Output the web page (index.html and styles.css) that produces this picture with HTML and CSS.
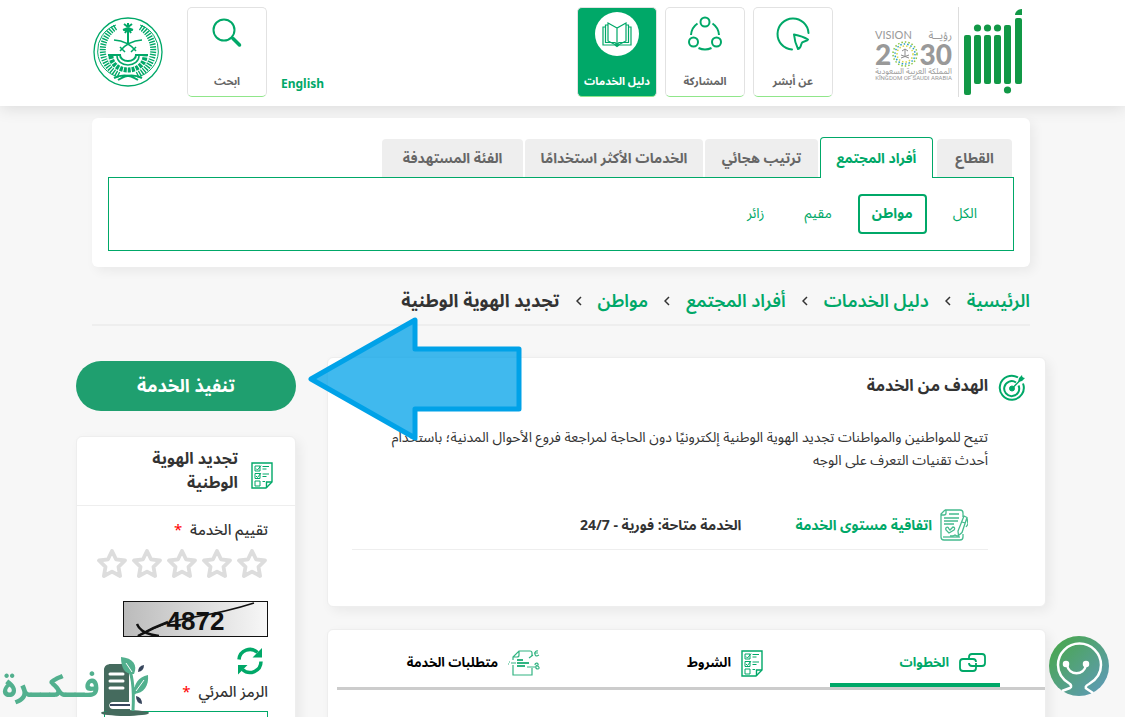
FILE: index.html
```html
<!DOCTYPE html>
<html lang="ar" dir="rtl">
<head>
    <meta charset="UTF-8">
    <meta name="viewport" content="width=device-width, initial-scale=1.0">
    <title>تجديد الهوية الوطنية</title>
    <link rel="stylesheet" href="styles.css">
</head>
<body>
    <!-- shared icons -->
    <svg class="defs" width="0" height="0" aria-hidden="true">
        <symbol id="star" viewBox="0 0 32 30">
            <path d="M16 3l4 8.300 9 1.200-6.500 6.300 1.600 9.200-8.100-4.400-8.100 4.400 1.600-9.200L3 12.500l9-1.200z" fill="none" stroke="#ddd" stroke-width="3.800" stroke-linejoin="round"/>
        </symbol>
        <symbol id="checklist" viewBox="0 0 22 27">
            <g fill="none" stroke="#00a868">
                <path d="M1 1h20v19l-6 6H1z" stroke-width="1.400"/>
                <path d="M21 20h-5.500v6" stroke-width="1.400"/>
                <path d="M4 4h5v5H4zM4 11.500h5v5H4zM4 19h5v5H4z"/>
                <path d="M5 6.500l1.500 1.500L10 3.500M5 14l1.500 1.500L10 11M11.500 4.500H18M11.500 7h4M11.500 12H18M11.500 14.500h4M11.500 19.500H14"/>
            </g>
        </symbol>
    </svg>

    <header class="header">
        <div class="container header-row">
            <a class="logo" href="#" aria-label="أبشر">
                <svg width="60" height="88" viewBox="0 0 60 88">
                    <g fill="#119846">
                        <rect x="1" y="27" width="7" height="60" rx="2"/>
                        <rect x="11" y="27" width="7" height="49" rx="2"/>
                        <rect x="21" y="27" width="7" height="49" rx="2"/>
                        <rect x="31" y="27" width="7" height="49" rx="2"/>
                        <rect x="41" y="17" width="7" height="59" rx="2"/>
                        <rect x="52" y="10" width="7" height="66" rx="2"/>
                        <circle cx="14.500" cy="20" r="3.600"/>
                        <circle cx="24.500" cy="20" r="3.600"/>
                        <circle cx="34.500" cy="20" r="3.600"/>
                        <circle cx="44.500" cy="82" r="3.600"/>
                        <path d="M52 7c0-3 3-6 7-6v6z"/>
                    </g>
                </svg>
            </a>
            <div class="vision" dir="ltr">
                <div class="vision-top"><span>VISION</span><span lang="ar">رؤيــة</span></div>
                <div class="vision-year">
                    <span>2</span>
                    <svg width="26" height="26" viewBox="-13 -13 26 26">
                        <g fill="none" stroke-width="1.500" stroke-dasharray="1.500 2">
                            <circle r="12" stroke="#8cc63f"/>
                            <circle r="10" stroke="#2b9fc4"/>
                            <circle r="8" stroke="#d9d84a"/>
                        </g>
                        <path d="M0-5v7M-3-3l3-2 3 2M-4 4l8-3M4 4l-8-3" stroke="#8c8c8c" fill="none"/>
                    </svg>
                    <span>30</span>
                </div>
                <div class="vision-ar" lang="ar" dir="rtl">المملكة العربية السعودية</div>
                <div class="vision-en">KINGDOM OF SAUDI ARABIA</div>
            </div>
            <nav class="tiles">
                <a class="tile" href="#">
                    <svg width="36" height="36" viewBox="0 0 36 36" fill="none" stroke="#00a868" stroke-width="2" stroke-linecap="round" stroke-linejoin="round">
                        <path d="M17 33.500A15.500 15.500 0 1 1 33.500 17"/>
                        <path d="M19 18.500c5 1 10 2.500 14 5-1 2-6 1.500-6.500 4-.5 2-1 5-3.500 5.500-2-4-3.500-9-4-14.500z"/>
                    </svg>
                    <span>عن أبشر</span>
                </a>
                <a class="tile" href="#">
                    <svg width="36" height="36" viewBox="0 0 36 36" fill="none" stroke="#00a868" stroke-width="2">
                        <circle cx="18" cy="6" r="4.500"/>
                        <circle cx="6.500" cy="26" r="4.500"/>
                        <circle cx="29.500" cy="26" r="4.500"/>
                        <path d="M10.500 7.500A15 15 0 0 0 4 19M25.500 7.500A15 15 0 0 1 32 19M11.500 32a15 15 0 0 0 13 0"/>
                    </svg>
                    <span>المشاركة</span>
                </a>
                <a class="tile active" href="#">
                    <svg width="44" height="44" viewBox="0 0 44 44" fill="none" stroke="#00a868" stroke-width="1.200">
                        <circle cx="22" cy="22" r="22" fill="#fff" stroke="none"/>
                        <path d="M22 16l-9-5v18l9 4.500 9-4.500V11zM22 16v17"/>
                        <path d="M13 13h-2.500v17.500H20l2 2 2-2h9.500V13H31M10.500 15H8v18h12l2 1.500 2-1.500h12V15h-2.500"/>
                    </svg>
                    <span>دليل الخدمات</span>
                </a>
            </nav>
            <a class="lang" href="#" lang="en">English</a>
            <a class="tile" href="#">
                <svg width="36" height="36" viewBox="0 0 36 36" fill="none" stroke="#00a868">
                    <circle cx="15" cy="14" r="10.500" stroke-width="2"/>
                    <path d="M22.500 21.500l2 2" stroke-width="2"/>
                    <path d="M24 22.500l6.500 6.500" stroke-width="3.500" stroke-linecap="round"/>
                </svg>
                <span>ابحث</span>
            </a>
            <svg class="emblem" width="70" height="70" viewBox="-35 -35 70 70">
                <g fill="none" stroke="#00a868">
                    <circle r="34" stroke-width="1.300"/>
                    <path d="M-9 23A27 27 0 0 1-12-25M9 23A27 27 0 0 0 12-25" stroke-width="6" stroke-dasharray="1.400 1.200"/>
                    <path d="M-9 25A27 27 0 0 1-12-27M9 25A27 27 0 0 0 12-27"/>
                    <path d="M0-24V-9" stroke-width="2"/>
                    <path d="M0-24l-5 2M0-24l5 2M0-25l-4-3M0-25l4-3M0-24l-3 5M0-24l3 5M0-25v-4" stroke-width="2"/>
                    <path d="M-14-12Q0-11 8-1M14-12Q0-11-8-1M-8-5l5 5M8-5l-5 5" stroke-width="1.500"/>
                    <path d="M-17 4a17 14 0 0 0 34 0" stroke-width="5" stroke-dasharray="3 1"/>
                    <path d="M-20 3H-8a8 6 0 0 0 16 0h12" stroke-width="2"/>
                    <path d="M-11 4a11 9 0 0 0 22 0" stroke-width="1.500"/>
                    <path d="M-14 26Q-2 20 10 28M14 26Q2 20-10 28" stroke-width="2"/>
                </g>
            </svg>
        </div>
    </header>

    <main class="container">
        <section class="panel">
            <div class="tabs">
                <button class="tab">القطاع</button>
                <button class="tab selected">أفراد المجتمع</button>
                <button class="tab">ترتيب هجائي</button>
                <button class="tab">الخدمات الأكثر استخدامًا</button>
                <button class="tab">الفئة المستهدفة</button>
            </div>
            <div class="filters">
                <a href="#">الكل</a>
                <a class="current" href="#">مواطن</a>
                <a href="#">مقيم</a>
                <a href="#">زائر</a>
            </div>
        </section>

        <nav class="breadcrumb">
            <a href="#">الرئيسية</a>
            <svg width="6" height="10" viewBox="0 0 6 10"><path d="M5 1L1 5l4 4"/></svg>
            <a href="#">دليل الخدمات</a>
            <svg width="6" height="10" viewBox="0 0 6 10"><path d="M5 1L1 5l4 4"/></svg>
            <a href="#">أفراد المجتمع</a>
            <svg width="6" height="10" viewBox="0 0 6 10"><path d="M5 1L1 5l4 4"/></svg>
            <a href="#">مواطن</a>
            <svg width="6" height="10" viewBox="0 0 6 10"><path d="M5 1L1 5l4 4"/></svg>
            <span>تجديد الهوية الوطنية</span>
        </nav>

        <div class="columns">
            <div class="content">
                <section class="card goal">
                    <svg class="goal-icon" width="28" height="28" viewBox="0 0 28 28" fill="none" stroke="#00a868">
                        <path d="M20 3.500A12 12 0 1 0 25 9.500" stroke-width="2"/>
                        <path d="M18 8.500a7.500 7.500 0 1 0 2.500 3" stroke-width="2"/>
                        <circle cx="14" cy="14.500" r="2.500" fill="#00a868"/>
                        <path d="M14 14.500L25 3.500" stroke-width="1.500"/>
                        <path d="M20 8l1-4 3-3 .5 2.500 2.500.5-3 3z" fill="#00a868" stroke="none"/>
                    </svg>
                    <div class="goal-body">
                        <h2>الهدف من الخدمة</h2>
                        <p>تتيح للمواطنين والمواطنات تجديد الهوية الوطنية إلكترونيًا دون الحاجة لمراجعة فروع الأحوال المدنية؛ باستخدام أحدث تقنيات التعرف على الوجه</p>
                        <div class="sla">
                            <svg width="28" height="32" viewBox="0 0 28 32" fill="none" stroke="#45bb8e" stroke-width="1.300">
                                <path d="M5 1h15c2 0 3 1 3 3v4M5 1L1 5v23c0 2 1 3 3 3h16c2 0 3-1 3-3v-3M1 6h3c1 0 2-1 2-2V1"/>
                                <path d="M9 5h10M4 9h15M4 12h14M4 15h10" stroke-width="1.600"/>
                                <path d="M24 7l3 1.500-5 15-3.500 3L18 22zM22 13l3 1M27 9l1 6-2 3"/>
                                <path d="M9 24l-3-3c-1-3 2-4 3-1l1 1 3-3c2 0 2 2 1 3zM10 27h3l2-1 2 1h2"/>
                                <path d="M3 28h17"/>
                            </svg>
                            <a href="#">اتفاقية مستوى الخدمة</a>
                            <span>الخدمة متاحة: فورية - 24/7</span>
                        </div>
                    </div>
                </section>

                <section class="card details">
                    <div class="detail-tabs">
                        <button class="detail-tab on">
                            <svg width="27" height="20" viewBox="0 0 27 20" fill="none" stroke="#00a868" stroke-width="1.800">
                                <path d="M10 7V4c0-2 1-3 3-3h10c2 0 3 1 3 3v6c0 2-1 3-3 3H13c-2 0-3-1-3-3"/>
                                <path d="M17 10v5c0 2-1 3-3 3H4c-2 0-3-1-3-3V9c0-2 1-3 3-3h10c2 0 3 1 3 3"/>
                            </svg>
                            الخطوات
                        </button>
                        <button class="detail-tab">
                            <svg width="22" height="27"><use href="#checklist"/></svg>
                            الشروط
                        </button>
                        <button class="detail-tab">
                            <svg width="32" height="26" viewBox="0 0 32 26" fill="none" stroke="#32b482" stroke-width="1.200">
                                <path d="M5 10V7l6-6h11c2 0 2 1 2 2v3M5 15v10h19v-7M11 1v4c0 2-1 2-2 2H5"/>
                                <path d="M3 13h5M19 17h8M21 8l4-3"/>
                                <path d="M9 10h6M9 13h12M9 16h8" stroke-width="2"/>
                                <path d="M26 3h4M30 1c-4-1-4 5-1 5l2-1M27 15c0-3 4-2 3 0-3 0-3 4 0 4 2 0 1-4-2-3"/>
                                <path d="M0 14h1M1 12h1"/>
                            </svg>
                            متطلبات الخدمة
                        </button>
                    </div>
                </section>
            </div>

            <aside class="side">
                <button class="execute">تنفيذ الخدمة</button>
                <form class="card rate">
                    <div class="rate-head">
                        <svg width="22" height="27"><use href="#checklist"/></svg>
                        <h3>تجديد الهوية الوطنية</h3>
                    </div>
                    <div class="rate-body">
                        <fieldset class="rating">
                            <legend>تقييم الخدمة <b>*</b></legend>
                            <div class="stars">
                                <label><input type="radio" name="rate" value="1" aria-label="1"><svg width="32" height="30"><use href="#star"/></svg></label>
                                <label><input type="radio" name="rate" value="2" aria-label="2"><svg width="32" height="30"><use href="#star"/></svg></label>
                                <label><input type="radio" name="rate" value="3" aria-label="3"><svg width="32" height="30"><use href="#star"/></svg></label>
                                <label><input type="radio" name="rate" value="4" aria-label="4"><svg width="32" height="30"><use href="#star"/></svg></label>
                                <label><input type="radio" name="rate" value="5" aria-label="5"><svg width="32" height="30"><use href="#star"/></svg></label>
                            </div>
                        </fieldset>
                        <div class="captcha">
                            <span>4872</span>
                            <svg width="143" height="34" viewBox="0 0 143 34" fill="none" stroke="#111">
                                <path d="M14 34Q38 20 70 15T130 1" stroke-width="1.500"/>
                                <path d="M14 34q14-8 30-14M13 22q4 10 22 12" stroke-width="2.500"/>
                            </svg>
                        </div>
                        <button class="refresh" type="button" aria-label="تحديث">
                            <svg width="28" height="28" viewBox="0 0 28 28">
                                <path d="M3 12.500A11 11 0 0 1 21.500 5.500M25 14.500A11 11 0 0 1 6.500 22.500" fill="none" stroke="#00a868" stroke-width="3.500"/>
                                <path d="M26 1v9.500h-9.500zM2 27.500V18h9.500z" fill="#00a868"/>
                            </svg>
                        </button>
                        <label class="code-label" for="code">الرمز المرئي <b>*</b></label>
                        <input class="code" id="code" type="text">
                    </div>
                </form>
            </aside>
        </div>
    </main>

    <!-- pointer to the execute button -->
    <svg class="arrow" width="214" height="126" viewBox="0 0 214 126">
        <path d="M3 63L107 4v29h104v60H107v29z" fill="#00a2e8" fill-opacity=".75" stroke="#00a2e8" stroke-width="5" stroke-linejoin="round"/>
    </svg>

    <button class="assistant" aria-label="المساعد">
        <svg width="60" height="60" viewBox="0 0 60 60" fill="none" stroke="#fff" stroke-width="2.500">
            <defs>
                <linearGradient id="bot" x1="0" y1="0" x2="1" y2="1">
                    <stop offset=".15" stop-color="#4ba656"/>
                    <stop offset=".9" stop-color="#5e9bb3"/>
                </linearGradient>
            </defs>
            <circle cx="30" cy="30" r="30" fill="url(#bot)" stroke="none"/>
            <path d="M13 55l8-3c2-1 1-3 0-4-7-4-12-10-12-19a21.500 21.500 0 0 1 43 0c0 9-5 15-12 19-4 2-4 4-2 5l6 4"/>
            <path d="M18 29c2 11 17 11 19 0"/>
            <circle cx="17" cy="28" r="2" fill="#fff"/>
            <circle cx="37" cy="28" r="2" fill="#fff"/>
        </svg>
    </button>

    <div class="watermark">
        <svg width="50" height="60" viewBox="0 0 50 60">
            <path d="M4 54V13c0-4 3-6 7-6h18v38H13c-5 0-5 7 0 7h17v3z" fill="#456b5e"/>
            <path d="M10 17h13M10 24h13M10 31h13" stroke="#fff" stroke-width="3" stroke-linecap="round"/>
            <path d="M10 48h20" stroke="#37455c" stroke-width="2"/>
            <ellipse cx="25" cy="56" rx="24" ry="3" fill="#456b5e"/>
            <path d="M21 0c12 1 17 8 13 17-9 1-13-6-13-17zM48 18c1 11-4 18-14 19 0-10 4-17 14-19z" fill="#52b08e"/>
            <path d="M26 6q9 12 7 48M34 37q1-9 10-14" fill="none" stroke="#52b08e" stroke-width="3"/>
            <path d="M26 6l6 9M44 23l-8 11" stroke="#fff"/>
            <path d="M44 8q0 6-6 7 0-6 6-7zM36 39q6 1 6 8-6-1-6-8z" fill="#37455c"/>
        </svg>
        <span>فــكــرة</span>
    </div>
</body>
</html>
```
FILE: styles.css
```css
* {
    box-sizing: border-box;
}

body {
    margin: 0;
    height: 100vh;
    overflow: hidden;
    background-color: #f7f7f7;
    color: #333;
    font-family: "Noto Sans Arabic", "DejaVu Sans Condensed", "DejaVu Sans", sans-serif;
    font-size: 14px;
}

a {
    color: #00a868;
    text-decoration: none;
}

button {
    border: none;
    background: none;
    padding: 0;
    font-family: inherit;
    cursor: pointer;
}

svg {
    flex: none;
    display: block;
}

.defs {
    position: absolute;
}

.container {
    width: 100%;
    max-width: 973px;
    margin: 0 auto;
    padding-right: 3px;
}

/* header */
.header {
    background-color: #fff;
    box-shadow: 0 2px 16px rgba(0, 0, 0, 0.12);
    padding: 7px 0 9px;
}

.header-row {
    display: flex;
    align-items: center;
    padding: 0 26px 0 17px;
}

.logo {
    border-left: 1px solid #ddd;
    height: 90px;
    padding: 1px 0 1px 4px;
}

.vision {
    width: 77px;
    margin: 6px 6px 0 42px;
    color: #999;
    font-family: Lato, "Noto Sans Arabic", sans-serif;
}

.vision-top {
    display: flex;
    justify-content: space-between;
    font-size: 11px;
    line-height: 12px;
}

.vision-year {
    display: flex;
    align-items: center;
    justify-content: space-between;
    height: 26px;
    font-size: 28px;
    font-weight: 900;
    line-height: 26px;
}

.vision-ar {
    font-size: 8px;
    line-height: 8px;
    white-space: nowrap;
    text-align: center;
}

.vision-en {
    font-family: Roboto, sans-serif;
    font-size: 6px;
    line-height: 6px;
    white-space: nowrap;
    text-align: center;
}

.tiles {
    display: flex;
    gap: 8px;
    margin-left: auto;
}

.tile {
    display: flex;
    flex-direction: column;
    align-items: center;
    justify-content: space-between;
    width: 80px;
    height: 90px;
    padding: 8px 0 6px;
    border: 1px solid #e2e2e2;
    border-bottom-color: #90e68a;
    border-radius: 5px;
    color: #666;
    font-size: 11px;
    font-weight: bold;
    line-height: 16px;
}

.tile.active {
    padding-top: 4px;
    background-color: #00a868;
    color: #fff;
}

.lang {
    align-self: flex-end;
    margin: 0 0 3px 14px;
    font-family: "Noto Sans", sans-serif;
    font-size: 12px;
    font-weight: bold;
    line-height: 20px;
}

.emblem {
    margin-right: 24px;
}

/* classification panel */
.panel {
    margin: 12px 16px 0;
    padding: 19px 16px 16px;
    background-color: #fff;
    border-radius: 6px;
    box-shadow: 4px 4px 12px rgba(0, 0, 0, 0.06);
}

.tabs {
    display: grid;
    grid-template-columns: 77px 113px 113px 178px 141px;
    column-gap: 2px;
    align-items: end;
    padding: 0 2px;
}

.tab {
    height: 38px;
    background-color: #eee;
    border-radius: 4px 4px 0 0;
    color: #666;
    font-size: 14px;
    font-weight: bold;
    white-space: nowrap;
}

.tab:first-child {
    margin-left: 2px;
}

.tab.selected {
    height: 41px;
    margin-bottom: -1px;
    background-color: #fff;
    border: 1px solid #00a868;
    border-bottom: none;
    color: #00a868;
}

.filters {
    display: flex;
    gap: 12px;
    height: 74px;
    padding: 16px 22px;
    border: 1px solid #00a868;
}

.filters a {
    height: 40px;
    padding: 0 12px;
    border: 2px solid transparent;
    border-radius: 4px;
    line-height: 36px;
}

.filters .current {
    border-color: #00a868;
    font-weight: bold;
}

/* breadcrumb */
.breadcrumb {
    display: flex;
    align-items: center;
    gap: 16px;
    height: 59px;
    margin: 0 16px 31px;
    padding-top: 10px;
    border-bottom: 2px solid #eee;
    font-size: 18px;
    font-weight: 600;
    line-height: 28px;
    white-space: nowrap;
}

.breadcrumb span {
    font-weight: bold;
}

.breadcrumb path {
    fill: none;
    stroke: #333;
    stroke-width: 1.5;
}

/* columns */
.columns {
    display: grid;
    grid-template-columns: 1fr 220px;
    gap: 31px;
}

.content {
    display: flex;
    flex-direction: column;
    gap: 22px;
}

.card {
    background-color: #fff;
    border: 1px solid #eee;
    border-radius: 6px;
    box-shadow: 4px 4px 12px rgba(0, 0, 0, 0.06);
}

.goal {
    display: flex;
    gap: 10px;
    min-height: 250px;
    padding: 16px 19px 16px 24px;
}

.goal-body {
    flex: 1;
}

.goal h2 {
    margin: 0 0 28px;
    font-size: 16px;
    line-height: 24px;
}

.goal p {
    margin: 0;
    padding-left: 20px;
    font-size: 14px;
    line-height: 23px;
}

.sla {
    display: flex;
    align-items: center;
    gap: 8px;
    margin-top: 37px;
    padding: 0 20px 8px 0;
    border-bottom: 1px solid #eee;
    font-weight: bold;
}

.sla span {
    margin-right: 46px;
}

.details {
    height: 140px;
    padding: 13px 0 0 9px;
}

.detail-tabs {
    display: grid;
    grid-template-columns: repeat(3, 170px);
    gap: 53px;
    padding: 0 45px;
    border-bottom: 3px solid #ccc;
}

.detail-tab {
    display: flex;
    align-items: center;
    gap: 10px;
    height: 44px;
    padding: 0 14px;
    border-bottom: 4px solid transparent;
    font-size: 13px;
    font-weight: bold;
    white-space: nowrap;
}

.detail-tab.on {
    border-color: #00a868;
    color: #00a868;
}

/* side */
.execute {
    display: block;
    width: 100%;
    height: 50px;
    margin: 4px 0 25px;
    border-radius: 25px;
    background-color: #1f9f6f;
    color: #fff;
    font-size: 18px;
    font-weight: bold;
}

.rate-head {
    display: flex;
    align-items: center;
    gap: 13px;
    height: 69px;
    padding: 8px 22px 0;
    border-bottom: 1px solid #eee;
}

.rate-head h3 {
    margin: 0 0 8px;
    width: 100px;
    font-size: 16px;
    line-height: 24px;
}

.rate-body {
    padding: 12px 27px;
}

.rating {
    margin: 0;
    padding: 0;
    border: none;
}

.rating legend,
.code-label {
    padding: 0;
    font-size: 15px;
    font-weight: 500;
    line-height: 24px;
}

.rate b {
    margin-right: 4px;
    color: #f00;
    font-weight: normal;
}

.stars {
    display: flex;
    justify-content: space-between;
    margin: 6px 0 23px -8px;
}

.stars input {
    position: absolute;
    opacity: 0;
}

.captcha {
    position: relative;
    width: 145px;
    height: 36px;
    border: 1px solid #111;
    background: linear-gradient(to right, #bbb, #f7f7f7);
    color: #111;
    font-family: "Liberation Sans", sans-serif;
    font-size: 26px;
    font-weight: bold;
    line-height: 38px;
    text-align: center;
}

.captcha svg {
    position: absolute;
    left: 0;
    top: 0;
}

.refresh {
    display: block;
    margin: 10px 4px 5px;
}

.code-label {
    display: block;
}

.code {
    display: block;
    width: 100%;
    height: 34px;
    margin-top: 7px;
    border: 1px solid #00a868;
}

/* overlays */
.arrow {
    position: absolute;
    left: 308px;
    top: 316px;
}

.assistant {
    position: fixed;
    right: 16px;
    bottom: 21px;
}

.watermark {
    position: fixed;
    left: 2px;
    bottom: 0;
    display: flex;
    align-items: center;
    color: #52b08e;
    font-size: 32px;
    font-weight: bold;
    line-height: 60px;
}
```
